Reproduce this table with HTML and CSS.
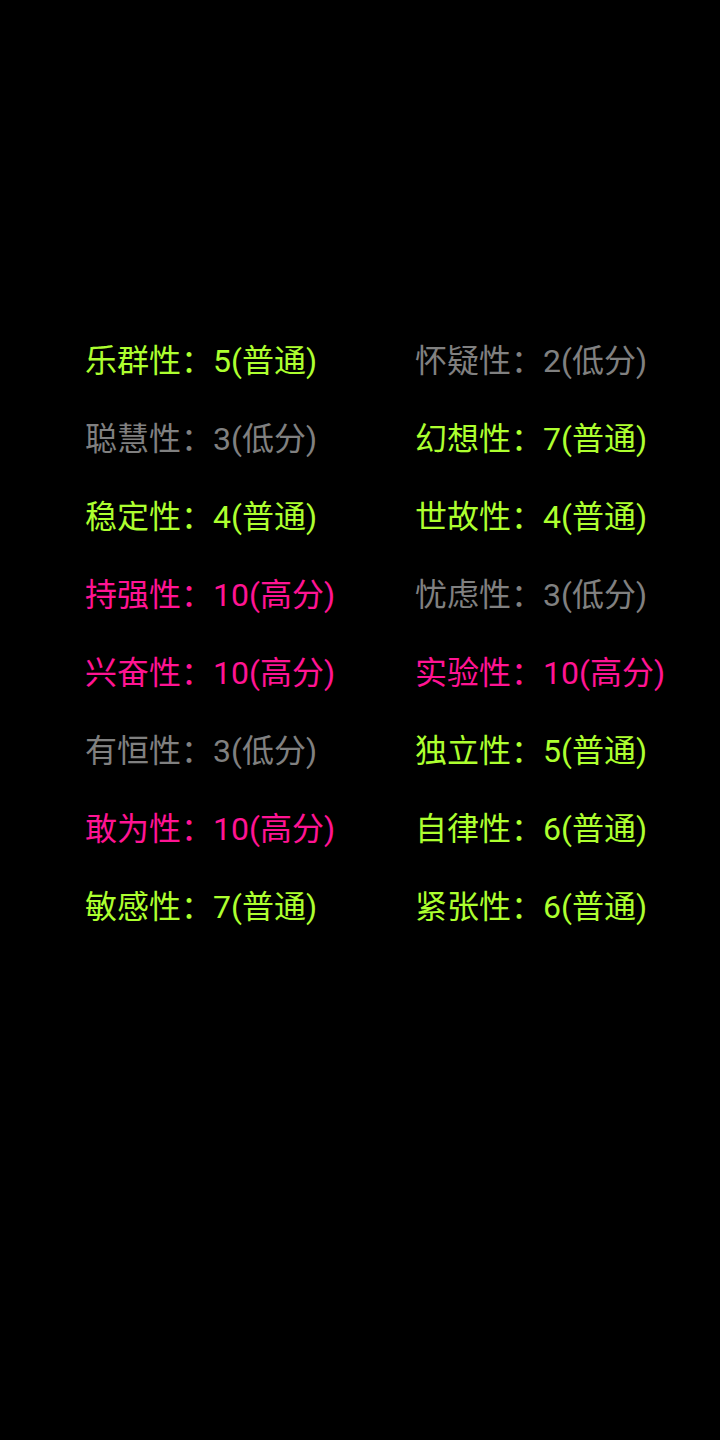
FILE: index.html
```html
<!DOCTYPE html>
<html lang="zh-CN">
<head>
<meta charset="utf-8">
<link rel="stylesheet" href="styles.css">
</head>
<body>
<div class="grid">
  <div class="item mid">乐群性：5(普通)</div>
  <div class="item low">怀疑性：2(低分)</div>
  <div class="item low">聪慧性：3(低分)</div>
  <div class="item mid">幻想性：7(普通)</div>
  <div class="item mid">稳定性：4(普通)</div>
  <div class="item mid">世故性：4(普通)</div>
  <div class="item high">持强性：10(高分)</div>
  <div class="item low">忧虑性：3(低分)</div>
  <div class="item high">兴奋性：10(高分)</div>
  <div class="item high">实验性：10(高分)</div>
  <div class="item low">有恒性：3(低分)</div>
  <div class="item mid">独立性：5(普通)</div>
  <div class="item high">敢为性：10(高分)</div>
  <div class="item mid">自律性：6(普通)</div>
  <div class="item mid">敏感性：7(普通)</div>
  <div class="item mid">紧张性：6(普通)</div>
</div>
</body>
</html>
```
FILE: styles.css
```css
html, body {
  margin: 0;
  padding: 0;
  background: #000;
}
body {
  width: 720px;
  height: 1440px;
  font-family: Roboto, "Noto Sans CJK SC", sans-serif;
}
.grid {
  display: grid;
  grid-template-columns: 330px 330px;
  grid-auto-rows: 78px;
  padding: 322px 0 0 85px;
}
.item {
  font-size: 32px;
  line-height: 78px;
  white-space: nowrap;
}
.mid { color: #adff2f; }
.low { color: #808080; }
.high { color: #ff1493; }
```
